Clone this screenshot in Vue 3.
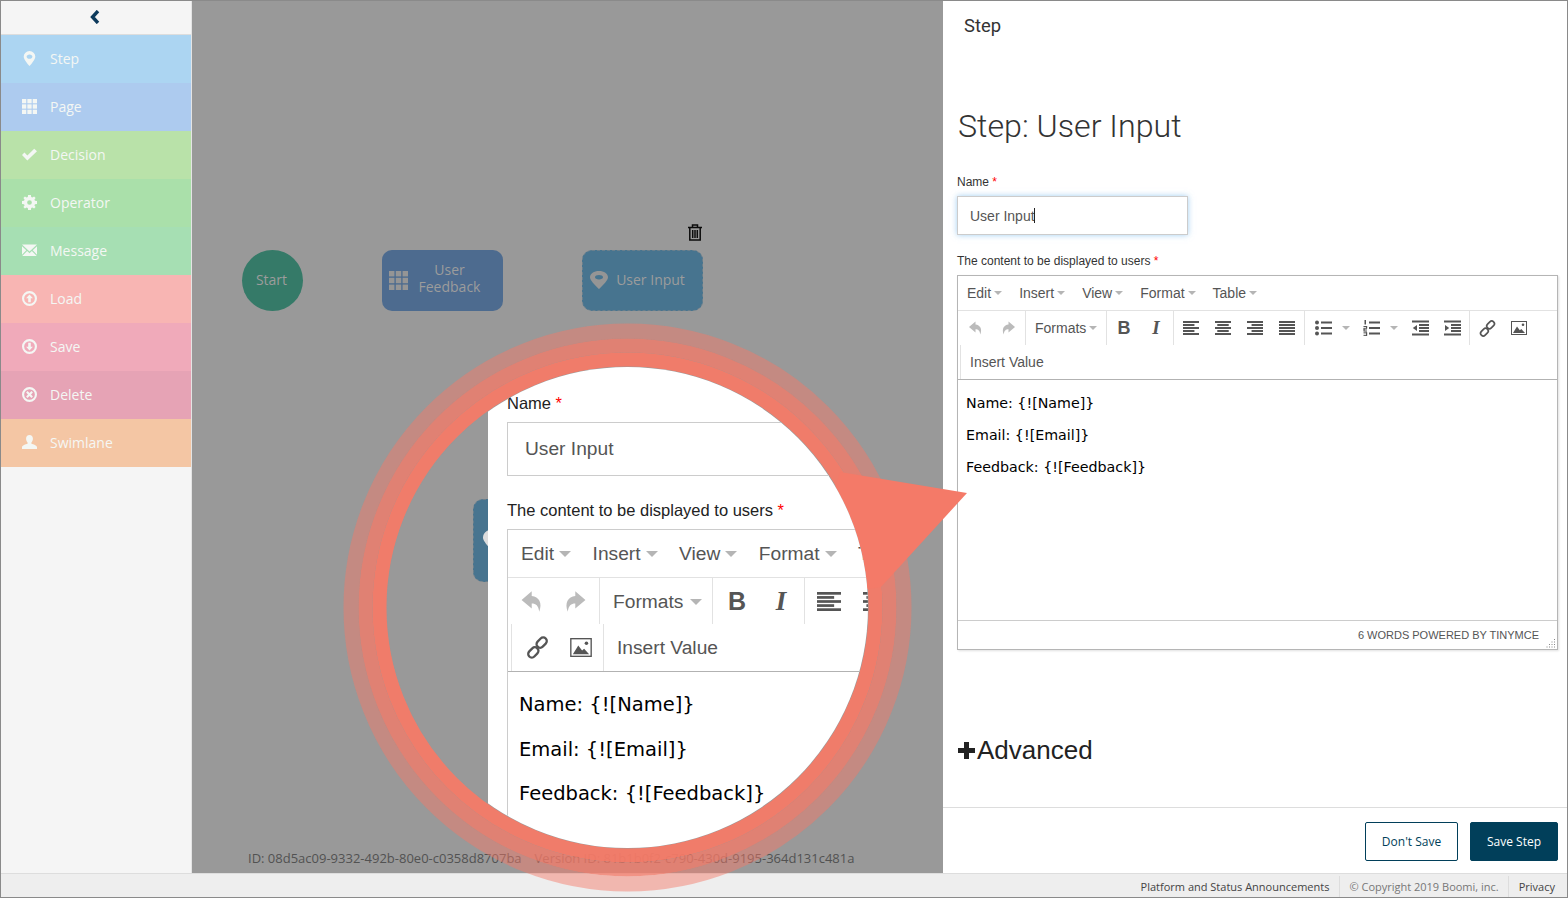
<script setup>
const sideItems = [
  { label: "Step", icon: "pin", color: "#acd5f2" },
  { label: "Page", icon: "grid", color: "#adcbef" },
  { label: "Decision", icon: "check", color: "#b9e2a9" },
  { label: "Operator", icon: "gear", color: "#aae0aa" },
  { label: "Message", icon: "mail", color: "#a6dfb3" },
  { label: "Load", icon: "up", color: "#f8b5b3" },
  { label: "Save", icon: "down", color: "#f0aaba" },
  { label: "Delete", icon: "cross", color: "#e6a3b5" },
  { label: "Swimlane", icon: "user", color: "#f4c6a4" },
];
const menus = ["Edit", "Insert", "View", "Format", "Table"];
const lines = ["Name: {![Name]}", "Email: {![Email]}", "Feedback: {![Feedback]}"];
const gridCells = [0, 1, 2].flatMap((r) => [0, 1, 2].map((c) => ({ x: c * 5, y: r * 5 })));
const alignBars = {
  left: [[0, 14], [3, 10], [6, 14], [9, 10], [12, 14]],
  center: [[0, 14], [3, 10, 2], [6, 14], [9, 10, 2], [12, 14]],
  right: [[0, 14], [3, 10, 4], [6, 14], [9, 10, 4], [12, 14]],
  justify: [[0, 14], [3, 14], [6, 14], [9, 14], [12, 14]],
};
</script>

<template>
  <div class="page">
    <!-- shared icon shapes -->
    <svg class="defs" width="0" height="0">
      <defs>
        <symbol id="i-pin" viewBox="0 0 14 14"><path fill-rule="evenodd" d="M7 0a5.400 5.400 0 0 0-5.400 5.400C1.600 8.500 7 14 7 14s5.400-5.500 5.400-8.600A5.400 5.400 0 0 0 7 0zm0 3.300c1.500 0 2.700.9 2.700 2S8.500 7.300 7 7.300s-2.700-.9-2.700-2 1.200-2 2.700-2z" fill="currentColor"/></symbol>
        <symbol id="i-pinw" viewBox="0 0 18 18"><path fill-rule="evenodd" d="M9 0C4 0 0 2.500 0 6.500 0 10 9 18 9 18s9-8 9-11.500C18 2.500 14 0 9 0zm0 4c2.200 0 4 .9 4 2.200S11.200 8.400 9 8.400 5 7.500 5 6.200 6.800 4 9 4z" fill="currentColor"/></symbol>
        <symbol id="i-grid" viewBox="0 0 14 14"><g fill="currentColor"><rect v-for="(c, i) in gridCells" :key="i" :x="c.x" :y="c.y" width="4" height="4"/></g></symbol>
        <symbol id="i-check" viewBox="0 0 14 14"><path d="M0 7.500l2.300-2.300 2.700 2.700L11.400 1.600 14 4 5 12.500z" fill="currentColor"/></symbol>
        <symbol id="i-gear" viewBox="0 0 14 14"><path fill-rule="evenodd" d="M5.700 0h2.600l.3 1.900 1.100.5L11.300 1.300l1.400 1.400-1.100 1.600.5 1.100 1.900.3v2.600l-1.900.3-.5 1.100 1.100 1.600-1.400 1.400-1.600-1.100-1.100.5-.3 1.900H5.700l-.3-1.900-1.100-.5-1.600 1.100-1.400-1.400 1.100-1.600-.5-1.100L0 8.300V5.700l1.900-.3.500-1.100L1.300 2.700l1.400-1.400 1.600 1.100 1.100-.5zM7 4.800a2.200 2.200 0 1 0 0 4.400 2.200 2.200 0 0 0 0-4.400z" fill="currentColor"/></symbol>
        <symbol id="i-mail" viewBox="0 0 14 14"><path d="M0 1.500h14L7 8zM0 3l4 3.700L0 11zM14 3l-4 3.700L14 11zM4.800 7.500L7 9.600l2.200-2.100 4.600 4.700H.2z" fill="currentColor"/></symbol>
        <symbol id="i-up" viewBox="0 0 14 14"><path fill-rule="evenodd" d="M7 0a7 7 0 1 0 0 14A7 7 0 0 0 7 0zm0 2a5 5 0 1 1 0 10A5 5 0 0 1 7 2zm0 1.200L3.800 6.800h2v3.600h2.400V6.800h2z" fill="currentColor"/></symbol>
        <symbol id="i-down" viewBox="0 0 14 14"><path fill-rule="evenodd" d="M7 0a7 7 0 1 0 0 14A7 7 0 0 0 7 0zm0 2a5 5 0 1 1 0 10A5 5 0 0 1 7 2zm0 8.800l3.200-3.600h-2V3.600H5.800v3.600h-2z" fill="currentColor"/></symbol>
        <symbol id="i-cross" viewBox="0 0 14 14"><path fill-rule="evenodd" d="M7 0a7 7 0 1 0 0 14A7 7 0 0 0 7 0zm0 2a5 5 0 1 1 0 10A5 5 0 0 1 7 2zM5.200 3.800L3.800 5.200 5.600 7 3.800 8.800l1.400 1.400L7 8.400l1.800 1.800 1.400-1.400L8.400 7l1.800-1.800-1.400-1.400L7 5.600z" fill="currentColor"/></symbol>
        <symbol id="i-user" viewBox="0 0 14 14"><path d="M7 0c2 0 3.200 1.500 3.200 3.500 0 1.400-.6 2.700-1.400 3.400v1.300c1.700.6 5.200 1.400 5.200 3.300V13H0v-1.500c0-1.900 3.500-2.700 5.200-3.300V6.900C4.400 6.200 3.800 4.900 3.800 3.500 3.800 1.500 5 0 7 0z" fill="currentColor"/></symbol>
        <symbol id="t-undo" viewBox="0 0 16 16"><path d="M7.500 1.500L1 7l6.500 5.500V9.200c2.700 0 4.300 1.300 4.800 5.300 2.200-5.500-.2-9.600-4.800-10z" fill="currentColor"/></symbol>
        <symbol id="t-redo" viewBox="0 0 16 16"><path d="M8.500 1.500L15 7l-6.500 5.500V9.200c-2.700 0-4.300 1.300-4.800 5.300-2.200-5.500.2-9.600 4.800-10z" fill="currentColor"/></symbol>
        <symbol id="t-bullet" viewBox="0 0 17 16"><g fill="currentColor"><circle cx="2" cy="2.500" r="2"/><circle cx="2" cy="8" r="2"/><circle cx="2" cy="13.500" r="2"/><rect x="6" y="1.500" width="11" height="2"/><rect x="6" y="7" width="11" height="2"/><rect x="6" y="12.500" width="11" height="2"/></g></symbol>
        <symbol id="t-number" viewBox="0 0 17 16"><g fill="currentColor"><rect x="1.500" y="0" width="1.500" height="4.500"/><rect x="0.500" y="6" width="3.500" height="1.200"/><rect x="3" y="6" width="1.200" height="2.500"/><rect x="0.500" y="8.300" width="3.500" height="1.200"/><rect x="0.500" y="8.300" width="1.200" height="2.500"/><rect x="0.500" y="10.500" width="3.500" height="1.100"/><rect x="0.500" y="12.300" width="3.500" height="1.100"/><rect x="3" y="12.300" width="1.200" height="3.500"/><rect x="0.500" y="14.800" width="3.500" height="1.100"/><rect x="6" y="1.500" width="11" height="2"/><rect x="6" y="7" width="11" height="2"/><rect x="6" y="12.500" width="11" height="2"/></g></symbol>
        <symbol id="t-outdent" viewBox="0 0 17 16"><g fill="currentColor"><rect x="0" y="0.500" width="17" height="2"/><rect x="7" y="4" width="10" height="2"/><rect x="7" y="7" width="10" height="2"/><rect x="7" y="10" width="10" height="2"/><rect x="0" y="13.500" width="17" height="2"/><path d="M5 5v6L0.800 8z"/></g></symbol>
        <symbol id="t-indent" viewBox="0 0 17 16"><g fill="currentColor"><rect x="0" y="0.500" width="17" height="2"/><rect x="7" y="4" width="10" height="2"/><rect x="7" y="7" width="10" height="2"/><rect x="7" y="10" width="10" height="2"/><rect x="0" y="13.500" width="17" height="2"/><path d="M1 5v6L5.200 8z"/></g></symbol>
        <symbol id="t-link" viewBox="0 0 16 16"><g fill="none" stroke="currentColor" stroke-width="1.600"><rect x="8.400" y="0.600" width="5" height="8" rx="2.500" transform="rotate(45 10.900 4.600)"/><rect x="2.600" y="7.400" width="5" height="8" rx="2.500" transform="rotate(45 5.100 11.400)"/></g></symbol>
        <symbol id="t-image" viewBox="0 0 16 14"><rect x="0.500" y="0.500" width="15" height="13" fill="none" stroke="currentColor"/><path d="M2 12l4-6.500 2.800 3.800 1.500-1.300L14 12z" fill="currentColor"/><circle cx="12" cy="3.800" r="1.300" fill="currentColor"/></symbol>
      </defs>
    </svg>

    <div class="main">
      <aside class="sidebar">
        <div class="side-top">
          <svg width="10" height="14" viewBox="0 0 10 14"><path d="M8 1L2.500 7 8 13" fill="none" stroke="#0d3a5c" stroke-width="3.400"/></svg>
        </div>
        <div v-for="item in sideItems" :key="item.label" class="side-item" :style="{ background: item.color }">
          <svg class="side-icon" width="15" height="15"><use :href="'#i-' + item.icon"/></svg>
          <span>{{ item.label }}</span>
        </div>
      </aside>

      <section class="canvas">
        <div class="node node-start">Start</div>
        <div class="node node-page">
          <svg class="node-icon" width="19" height="19"><use href="#i-grid"/></svg>
          <span class="node-label">User<br>Feedback</span>
        </div>
        <div class="node node-step">
          <svg class="node-icon" width="18" height="18"><use href="#i-pinw"/></svg>
          <span class="node-label">User Input</span>
        </div>
        <svg class="trash" width="14" height="17" viewBox="0 0 14 17">
          <path d="M0 3.500h14M4.500 3.500V1h5v2.500M1.800 3.500v12.500h10.400V3.500M4.700 6v8M7 6v8M9.300 6v8" fill="none" stroke="#0b0b0b" stroke-width="1.500"/>
        </svg>
        <div class="ids">
          <span>ID: 08d5ac09-9332-492b-80e0-c0358d8707ba</span>
          <span>Version ID: 81b1b0f2-c790-430d-9195-364d131c481a</span>
        </div>
      </section>

      <section class="panel">
        <div class="panel-tab">Step</div>
        <div class="panel-body">
          <h1>Step: User Input</h1>
          <label class="field-label">Name <em>*</em></label>
          <div class="name-input"><span>User Input</span><i class="caret-bar"></i></div>
          <label class="field-label editor-label">The content to be displayed to users <em>*</em></label>

          <div class="editor">
            <div class="menu-row">
              <span v-for="m in menus" :key="m" class="menu-item">{{ m }}<b class="tri"></b></span>
            </div>
            <div class="tool-row">
              <div class="tool-group first">
                <svg class="ti off" width="16" height="16"><use href="#t-undo"/></svg>
                <svg class="ti off" width="16" height="16"><use href="#t-redo"/></svg>
              </div>
              <div class="tool-group formats">
                <span>Formats</span><b class="tri"></b>
              </div>
              <div class="tool-group marks">
                <span class="bold">B</span><span class="ital">I</span>
              </div>
              <div class="tool-group aligns">
                <svg v-for="(bars, key) in alignBars" :key="key" class="ti" width="16" height="14" viewBox="0 0 14 14" preserveAspectRatio="none">
                  <rect v-for="(b, i) in bars" :key="i" :x="b[2] || 0" :y="b[0]" :width="b[1]" height="2" fill="currentColor"/>
                </svg>
              </div>
              <div class="tool-group lists">
                <svg class="ti" width="17" height="16"><use href="#t-bullet"/></svg><b class="tri l1"></b>
                <svg class="ti" width="17" height="16"><use href="#t-number"/></svg><b class="tri l2"></b>
                <svg class="ti" width="17" height="16"><use href="#t-outdent"/></svg>
                <svg class="ti ml" width="17" height="16"><use href="#t-indent"/></svg>
              </div>
              <div class="tool-group links">
                <svg class="ti" width="17" height="17"><use href="#t-link"/></svg>
                <svg class="ti" width="16" height="14"><use href="#t-image"/></svg>
              </div>
            </div>
            <div class="value-row"><span class="value-btn">Insert Value</span></div>
            <div class="content">
              <p v-for="l in lines" :key="l">{{ l }}</p>
            </div>
            <div class="status">
              <span>6 WORDS POWERED BY TINYMCE</span>
              <svg class="grip" width="10" height="10" viewBox="0 0 10 10"><path d="M8.500 1v1M6 3.500v1M8.500 3.500v1M3.500 6v1M6 6v1M8.500 6v1M1 8.500v1M3.500 8.500v1M6 8.500v1M8.500 8.500v1" stroke="#888" stroke-width="1" fill="none"/></svg>
            </div>
          </div>

          <div class="advanced">
            <svg width="20" height="19" viewBox="0 0 20 19"><path d="M7 1h5v6h6v5h-6v6H7v-6H1V7h6z" fill="#222"/></svg>
            <span>Advanced</span>
          </div>
        </div>
        <div class="panel-foot">
          <button class="btn btn-ghost">Don't Save</button>
          <button class="btn btn-solid">Save Step</button>
        </div>
      </section>
    </div>

    <footer class="foot">
      <span>Platform and Status Announcements</span>
      <span>&copy; Copyright 2019 Boomi, inc.</span>
      <span>Privacy</span>
    </footer>

    <!-- callout rings and arrow -->
    <svg class="callout" width="1568" height="898" viewBox="0 0 1568 898">
      <circle cx="627.500" cy="607.500" r="276.500" fill="none" stroke="#f47a68" stroke-opacity="0.47" stroke-width="15"/>
      <circle cx="627.500" cy="607.500" r="262" fill="none" stroke="#f47a68" stroke-opacity="0.78" stroke-width="14"/>
      <circle cx="627.500" cy="607.500" r="248" fill="none" stroke="#f57a67" stroke-opacity="0.94" stroke-width="14"/>
      <polygon points="840,472 967,493 881,587 800,600" fill="#f47a68"/>
    </svg>

    <!-- magnified view of the form -->
    <div class="lens">
      <div class="lens-node">
        <svg width="24" height="24"><use href="#i-pinw"/></svg>
      </div>
      <div class="lens-sheet">
        <div class="lens-label lens-name">Name <em>*</em></div>
        <div class="lens-input">User Input</div>
        <div class="lens-label lens-content">The content to be displayed to users <em>*</em></div>
        <div class="lens-editor">
          <div class="lens-menu">
            <span v-for="m in menus" :key="m" class="lens-menu-item">{{ m }}<b class="tri big"></b></span>
          </div>
          <div class="lens-tools">
            <div class="lens-group undo">
              <svg class="ti off" width="25" height="25"><use href="#t-undo"/></svg>
              <svg class="ti off" width="25" height="25"><use href="#t-redo"/></svg>
            </div>
            <div class="lens-group formats">
              <span>Formats</span><b class="tri big"></b>
            </div>
            <div class="lens-group marks">
              <span class="bold">B</span><span class="ital">I</span>
            </div>
            <div class="lens-group aligns">
              <svg v-for="key in ['left', 'center']" :key="key" class="ti" width="24" height="19" viewBox="0 0 14 14" preserveAspectRatio="none">
                <rect v-for="(b, i) in alignBars[key]" :key="i" :x="b[2] || 0" :y="b[0]" :width="b[1]" height="2" fill="currentColor"/>
              </svg>
            </div>
          </div>
          <div class="lens-value">
            <div class="lens-group links">
              <svg class="ti" width="23" height="23"><use href="#t-link"/></svg>
              <svg class="ti" width="22" height="19"><use href="#t-image"/></svg>
            </div>
            <span class="lens-value-text">Insert Value</span>
          </div>
          <div class="lens-text">
            <p v-for="l in lines" :key="l">{{ l }}</p>
          </div>
        </div>
      </div>
    </div>

    <div class="frame"></div>
  </div>
</template>

<style>
html, body { margin: 0; background: #fff; }
</style>

<style scoped>
.page {
  position: relative;
  width: 1568px;
  height: 898px;
  overflow: hidden;
  display: flex;
  flex-direction: column;
  font-family: "Open Sans", sans-serif;
}
.defs { position: absolute; }
.frame {
  position: absolute;
  inset: 0;
  border: 1px solid #8a8a8a;
  pointer-events: none;
}
.main { flex: 1; display: flex; min-height: 0; }

.sidebar { width: 192px; background: #f5f5f5; padding-left: 1px; box-sizing: border-box; border-right: 1px solid #e4e4e4; }
.side-top { height: 34px; border-bottom: 1px solid #ddd; display: flex; align-items: center; justify-content: center; padding-right: 2px; }
.side-item {
  height: 48px;
  box-sizing: border-box;
  padding: 0 0 2px 21px;
  display: flex;
  align-items: center;
  gap: 13px;
  color: #f4f7f4;
  font-size: 14px;
}
.side-icon { flex: none; }

.canvas { width: 751px; background: #999; position: relative; }
.node {
  position: absolute;
  top: 250px;
  height: 61px;
  box-sizing: border-box;
  color: #9c9c9c;
  font-size: 14px;
  display: flex;
  align-items: center;
}
.node-start { left: 50px; width: 61px; border-radius: 50%; background: #357a68; justify-content: center; padding: 0 2px 2px 0; }
.node-page { left: 190px; width: 121px; border-radius: 10px; background: #4d6b8f; padding: 0 12px 0 7px; }
.node-page .node-label { padding-bottom: 5px; }
.node-step { left: 390px; width: 121px; border-radius: 10px; background: #47748f; border: 1px dashed #6a7f8c; padding: 0 9px 2px 7px; }
.node-icon { flex: none; color: #959595; }
.node-label { flex: 1; text-align: center; line-height: 17px; }
.trash { position: absolute; left: 496px; top: 224px; }
.ids {
  position: absolute;
  left: 56px;
  top: 849px;
  display: flex;
  gap: 13px;
  font-size: 13px;
  color: #525252;
  white-space: nowrap;
}

.panel { flex: 1; background: #fff; display: flex; flex-direction: column; font-family: "Liberation Sans", sans-serif; }
.panel-tab { font-family: Roboto, sans-serif; font-size: 18.400px; color: #333; padding: 15px 0 0 21px; height: 21px; line-height: 21px; }
.panel-body { flex: 1; padding: 0 10px 0 14px; }
h1 { font-family: Roboto, sans-serif; font-weight: 300; font-size: 32.200px; line-height: 38px; color: #333; margin: 71px 0 0 1px; }
.field-label { display: block; font-size: 12px; line-height: 14px; color: #333; margin-top: 30px; }
.field-label em, .lens-label em { color: #f00; font-style: normal; }
.name-input {
  width: 231px;
  height: 39px;
  box-sizing: border-box;
  margin-top: 7px;
  border: 1px solid #ccc;
  box-shadow: 0 0 6px rgba(102, 175, 233, 0.6);
  display: flex;
  align-items: center;
  padding-left: 12px;
  font-size: 14px;
  color: #555;
}
.caret-bar { width: 1px; height: 15px; background: #222; margin-left: -1px; }
.editor-label { margin-top: 19px; }
.editor {
  margin-top: 7px;
  height: 375px;
  box-sizing: border-box;
  border: 1px solid #b5b5b5;
  box-shadow: 1px 1px 2px rgba(0, 0, 0, 0.12);
  display: flex;
  flex-direction: column;
}
.menu-row { height: 34px; border-bottom: 1px solid #e2e2e2; display: flex; align-items: center; padding-left: 9px; gap: 17px; font-size: 14px; color: #555; }
.menu-item { display: flex; align-items: center; gap: 3px; }
.tri { display: inline-block; flex: none; width: 0; height: 0; border: 4px solid transparent; border-top: 4px solid #b5b5b5; border-bottom: 0; }
.tri.big { border-width: 6px 6px 0; }
.tri.l1 { margin: 0 13px 0 10px; }
.tri.l2 { margin: 0 14px 0 10px; }
.tool-row { height: 34px; display: flex; align-items: stretch; color: #555; font-size: 14px; }
.tool-group { display: flex; align-items: center; flex: none; box-sizing: border-box; border-right: 1px solid #e2e2e2; }
.tool-group.first { width: 68px; padding-left: 10px; gap: 16px; }
.ti { color: #555; flex: none; }
.ti.off { color: #bbb; }
.formats { gap: 3px; width: 81px; padding-left: 9px; }
.marks { width: 67px; padding-left: 9px; gap: 16px; }
.bold, .ital { display: inline-block; width: 16px; text-align: center; font-weight: 700; font-size: 18px; line-height: 20px; }
.ital { font-style: italic; font-size: 19px; font-family: "Liberation Serif", serif; }
.aligns { width: 131px; padding-left: 9px; gap: 16px; }
.lists { width: 165px; padding-left: 10px; }
.ml { margin-left: 15px; }
.links { padding-left: 9px; gap: 15px; border-right: 0; }
.value-row { height: 34px; border-bottom: 1px solid #b2b2b2; display: flex; align-items: stretch; font-size: 14px; color: #555; padding-left: 2px; }
.value-btn { display: flex; align-items: center; padding-left: 9px; border-left: 1px solid #e2e2e2; }
.content { flex: 1; padding: 14px 0 0 8px; font-family: "DejaVu Sans", sans-serif; font-size: 14.250px; color: #000; }
.content p { margin: 0 0 14px; line-height: 18px; }
.status { height: 28px; border-top: 1px solid #ccc; display: flex; align-items: center; justify-content: flex-end; padding-right: 18px; font-size: 11px; color: #555; position: relative; }
.grip { position: absolute; right: 1px; bottom: 1px; }
.advanced { margin-top: 85px; display: flex; align-items: center; font-size: 26px; line-height: 30px; color: #222; }
.panel-foot { height: 51px; border-top: 1px solid #ddd; display: flex; justify-content: flex-end; gap: 12px; padding: 14px 10px 0 0; }
.btn { width: 93px; height: 39px; font-family: "Open Sans", sans-serif; font-size: 12px; border-radius: 2px; }
.btn-ghost { background: #fff; border: 1px solid #013f5a; color: #013f5a; }
.btn-solid { background: #013f5a; border: 1px solid #013f5a; color: #fff; width: 88px; }

.foot {
  height: 25px;
  flex: none;
  background: #eee;
  border-top: 1px solid #ddd;
  box-sizing: border-box;
  display: flex;
  justify-content: flex-end;
  align-items: center;
  padding: 1px 13px 0 0;
  font-size: 11px;
  color: #444;
}
.foot span { padding: 0 9px 0 10px; border-left: 1px solid #ddd; line-height: 22px; }
.foot span:first-child { border-left: 0; padding-right: 10px; }
.foot span:nth-child(2) { color: #777; padding-left: 9px; }
.foot span:last-child { padding-right: 0; }

.callout { position: absolute; left: 0; top: 0; pointer-events: none; }

.lens {
  position: absolute;
  left: 387px;
  top: 367px;
  width: 481px;
  height: 481px;
  border-radius: 50%;
  overflow: hidden;
  background: #999;
  font-family: "Liberation Sans", sans-serif;
}
.lens-node { position: absolute; left: 86px; top: 132px; width: 40px; height: 83px; border-radius: 10px; background: #47748f; border: 1px dashed #6a7f8c; display: flex; align-items: center; padding-left: 9px; box-sizing: border-box; color: #ddd; }
.lens-sheet { position: absolute; left: 101px; top: 0; right: 0; bottom: 0; background: #fff; padding-left: 19px; }
.lens-label { font-size: 16.500px; line-height: 20px; color: #222; }
.lens-name { padding-top: 26px; }
.lens-input { margin-top: 9px; height: 54px; box-sizing: border-box; border: 1px solid #ccc; border-right: 0; padding-left: 17px; font-size: 19.200px; line-height: 52px; color: #555; }
.lens-content { margin-top: 24px; }
.lens-editor { margin-top: 9px; height: 400px; border: 1px solid #ccc; border-width: 1px 0 0 1px; }
.lens-menu { height: 47px; border-bottom: 1px solid #e2e2e2; display: flex; align-items: center; padding-left: 13px; font-size: 19.200px; color: #555; gap: 21.500px; white-space: nowrap; }
.lens-menu-item { display: flex; align-items: center; gap: 5px; flex: none; }
.lens-tools { height: 46px; display: flex; align-items: stretch; color: #555; font-size: 19.200px; white-space: nowrap; }
.lens-group { display: flex; align-items: center; flex: none; border-right: 1px solid #e2e2e2; box-sizing: border-box; }
.lens-group.undo { width: 92px; padding-left: 12px; gap: 17px; }
.lens-group.formats { width: 113px; padding: 2px 0 0 13px; gap: 7px; }
.lens-group.marks { width: 92px; padding-left: 12px; gap: 20px; }
.lens-group.marks .bold, .lens-group.marks .ital { width: 24px; font-size: 25px; line-height: 28px; }
.lens-group.marks .ital { font-size: 27px; }
.lens-group.aligns { padding-left: 12px; gap: 22px; border-right: 0; }
.lens-value { height: 47px; border-bottom: 1px solid #b2b2b2; display: flex; align-items: stretch; padding-left: 3px; }
.lens-group.links { width: 93px; padding-left: 14px; gap: 21px; border-left: 1px solid #e2e2e2; }
.lens-value-text { font-size: 19.200px; color: #555; padding-left: 13px; line-height: 47px; }
.lens-text { padding: 20px 0 0 11px; font-family: "DejaVu Sans", sans-serif; font-size: 19.500px; color: #000; }
.lens-text p { margin: 0 0 19.500px; line-height: 25px; white-space: nowrap; }
</style>
